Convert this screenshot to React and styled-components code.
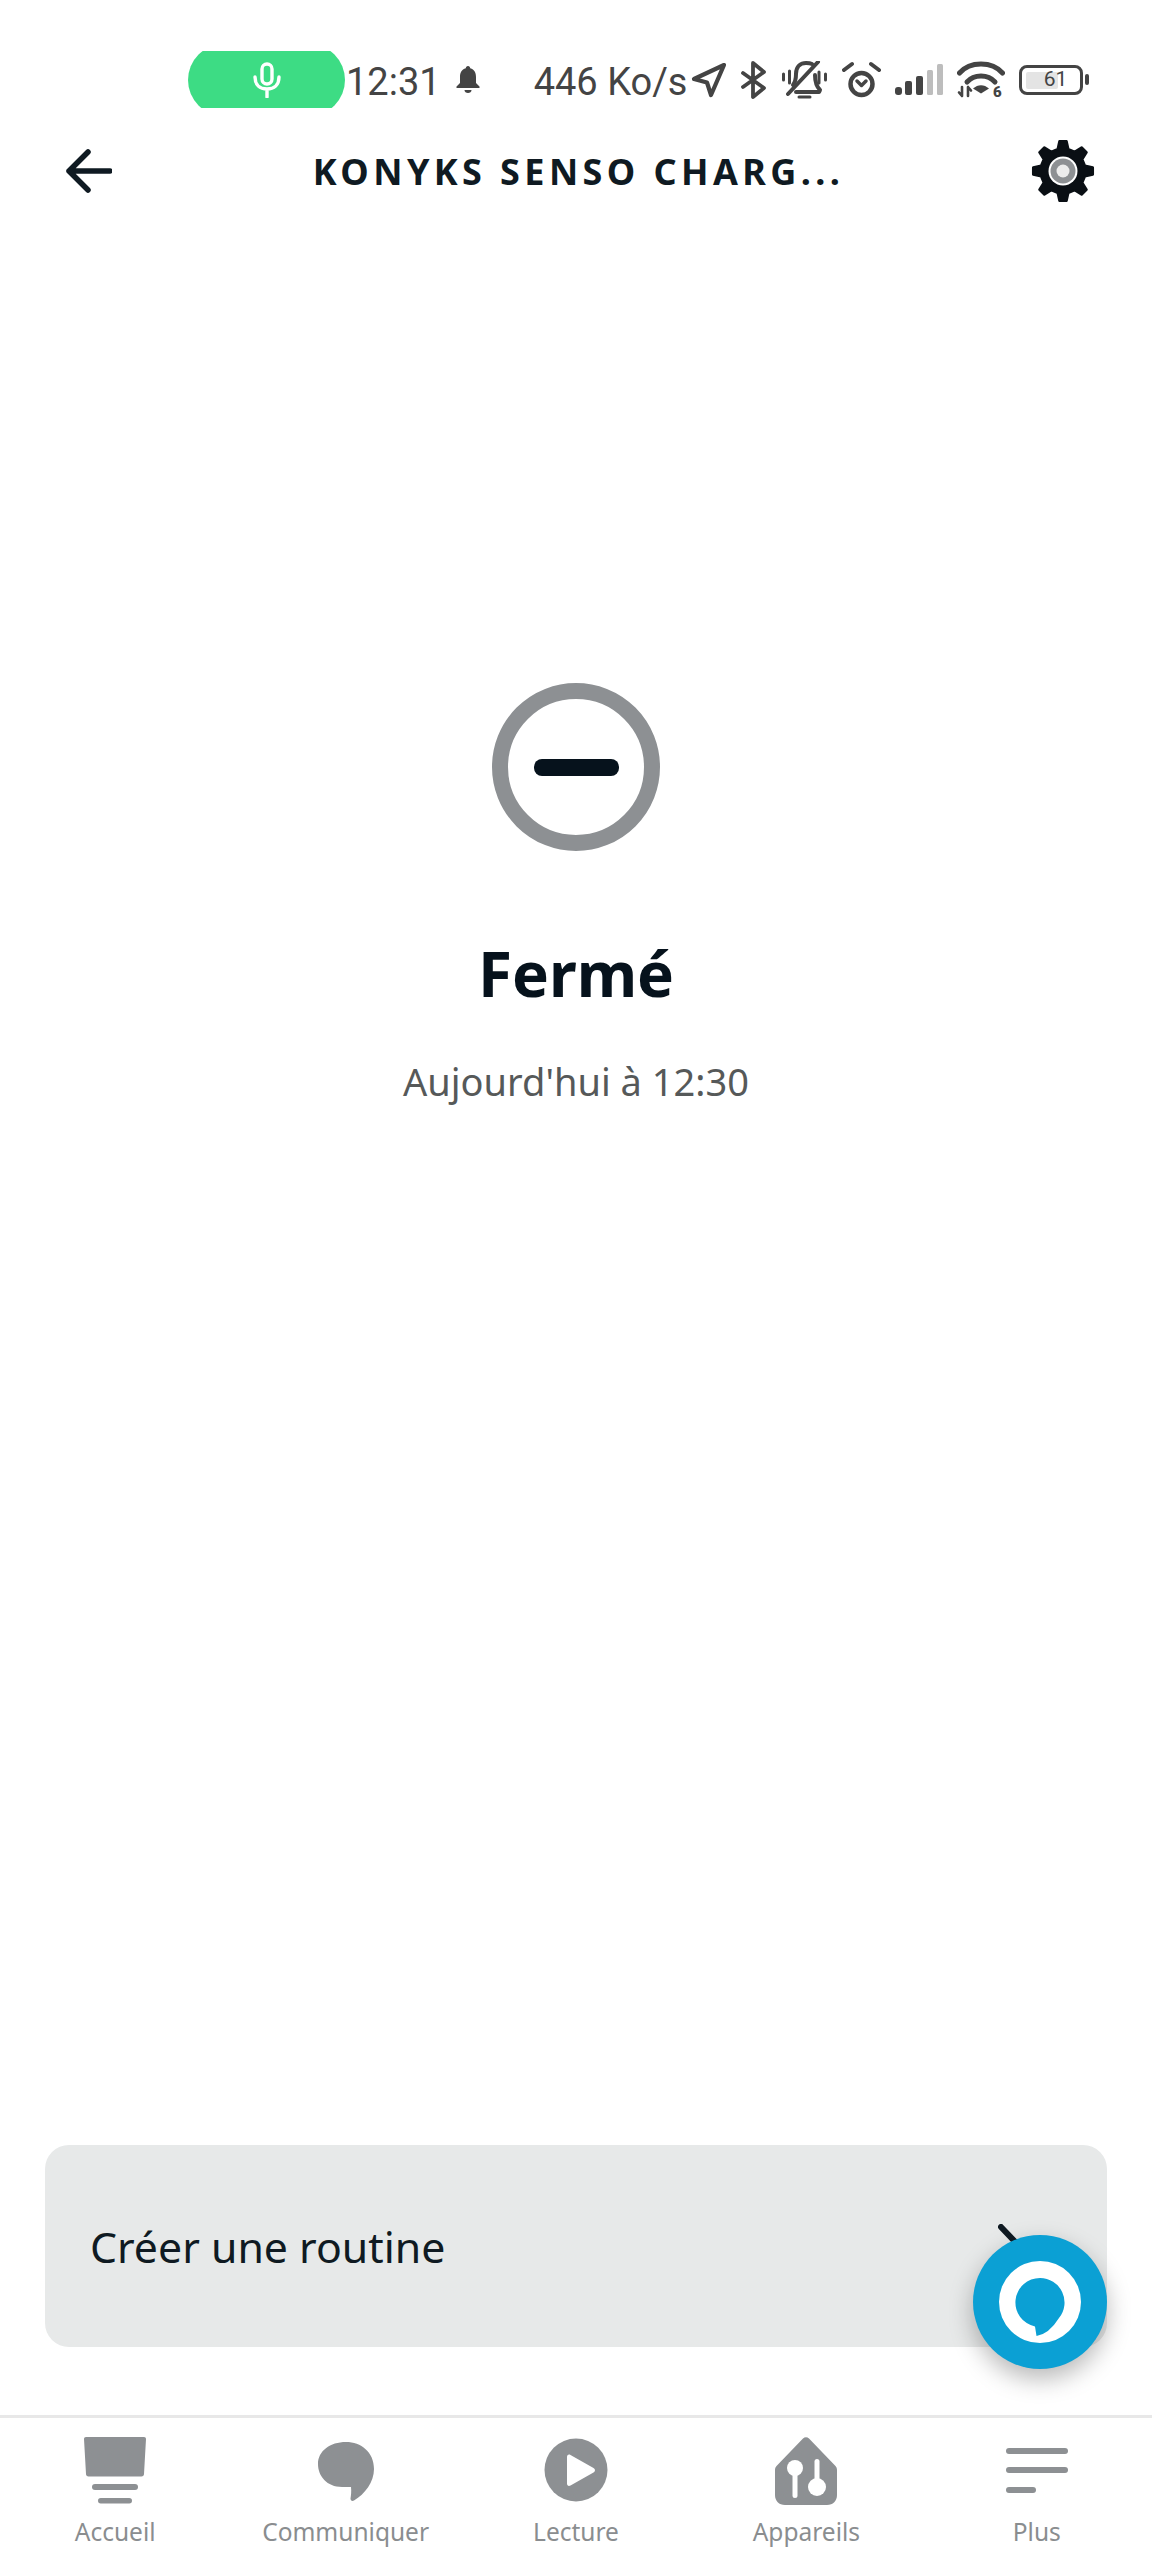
import React from 'react'
import styled, { createGlobalStyle } from 'styled-components'

const GlobalStyle = createGlobalStyle`
  html, body {
    margin: 0;
    padding: 0;
    background: #fff;
  }
  * {
    box-sizing: border-box;
  }
`

// builds the settings cog outline, 8 teeth
function gearPath(cx, cy, outer, root) {
  const pts = []
  const teeth = 8
  for (let i = 0; i < teeth; i++) {
    const a = (i / teeth) * Math.PI * 2 - Math.PI / 2
    const step = Math.PI / teeth
    const at = (r, t) => `${(cx + r * Math.cos(t)).toFixed(2)} ${(cy + r * Math.sin(t)).toFixed(2)}`
    pts.push(at(root, a - step * 0.6), at(outer, a - step * 0.3), at(outer, a + step * 0.3), at(root, a + step * 0.6))
  }
  return 'M' + pts.join('L') + 'Z'
}

function App() {
  return (
    <>
      <GlobalStyle />
      <Page>
        <StatusBar>
          <PillClip>
            <Pill>
              <svg width="28" height="36" viewBox="0 0 28 36" fill="none" stroke="#fff" strokeWidth="3.4" strokeLinecap="round">
                <rect x="9" y="2" width="10" height="20" rx="5" />
                <path d="M2 15c0 8 5 12 12 12s12-4 12-12M14 27v8" />
              </svg>
            </Pill>
          </PillClip>
          <Clock>12:31</Clock>
          <BellIcon width="24" height="27" viewBox="0 0 24 27" fill="#444">
            <path d="M12 0c1.400 0 2.200 1 2.200 2.300C18.500 3.500 20 7 20 11v6l3.500 3.500V22H.5v-1.500L4 17v-6c0-4 1.500-7.500 5.800-8.700C9.800 1 10.600 0 12 0z" />
            <path d="M8.500 24h7c0 1.800-1.500 3-3.500 3s-3.500-1.200-3.500-3z" />
          </BellIcon>
          <Speed>446 Ko/s</Speed>
          <StatusIcon $ml={4} width="36" height="36" viewBox="0 0 36 36" fill="none" stroke="#444" strokeWidth="4.2" strokeLinejoin="round">
            <path d="M33 3 3 17l13 3.500L20 33z" />
          </StatusIcon>
          <StatusIcon $ml={14} width="26" height="38" viewBox="0 0 26 38" fill="none" stroke="#444" strokeWidth="3.800" strokeLinejoin="round" strokeLinecap="round">
            <path d="M2 12 23 27 12 36V2l11 9L2 26" />
          </StatusIcon>
          <StatusIcon $ml={15} width="46" height="38" viewBox="0 0 46 38" fill="none" stroke="#444" strokeWidth="4" strokeLinecap="round" strokeLinejoin="round">
            <path d="M1.500 13v6M7.500 10v12M37 11v11M43.500 13v6" strokeWidth="3" />
            <path d="M11 24c3-4 3-7 3-11 0-8 5-11 10-11 2 0 4 0 6 1M33 14c0 6 1 11 5 15l-1 2H14" />
            <path d="M36 1 6 33" />
            <path d="M17 36h11" strokeWidth="3" />
          </StatusIcon>
          <StatusIcon $ml={14} width="40" height="38" viewBox="0 0 40 38" fill="none" stroke="#444" strokeLinecap="round" strokeLinejoin="round">
            <circle cx="19.500" cy="23" r="11" strokeWidth="4.500" />
            <path d="M15 20l4.500 4.500L24 20" strokeWidth="3.500" />
            <path d="M2 9l8-6M37 9l-8-6" strokeWidth="4" />
          </StatusIcon>
          <StatusIcon $ml={13} width="49" height="32" viewBox="0 0 49 32" fill="#444">
            <rect x="0" y="23" width="7" height="8" rx="3" />
            <rect x="10" y="17" width="7" height="14" rx="2" />
            <rect x="21" y="12" width="7" height="19" rx="2" />
            <rect x="32" y="6" width="6" height="25" rx="1.500" fill="#bdbdbd" />
            <rect x="42" y="0" width="6" height="31" rx="1.500" fill="#bdbdbd" />
          </StatusIcon>
          <StatusIcon $ml={13} width="48" height="38" viewBox="0 0 48 38" fill="none" stroke="#444" strokeLinecap="round">
            <path d="M2.500 12C13 0 35 0 45.500 12" strokeWidth="5" />
            <path d="M10 21c7-8 21-8 28 0" strokeWidth="5" />
            <path d="M16 27.500c5-4.500 11-4.500 16 0l-8 5z" fill="#444" stroke="none" strokeLinejoin="round" />
            <path d="M5 26v9M2 31.500 5 35M11 26v9M11 26l3 3.500" strokeWidth="2.600" />
            <SpeedDigit x="36" y="36">6</SpeedDigit>
          </StatusIcon>
          <Battery>
            <BatteryFill />
            <BatteryLevel>61</BatteryLevel>
          </Battery>
          <BatteryNub />
        </StatusBar>

        <Header>
          <svg width="46" height="44" viewBox="0 0 46 44" fill="none" stroke="#0f1a22" strokeWidth="5.500" strokeLinecap="round" strokeLinejoin="round">
            <path d="M44 22H3M22 3 3 22l19 19" />
          </svg>
          <Title>KONYKS SENSO CHARG...</Title>
          <svg width="64" height="64" viewBox="0 0 64 64">
            <path d={gearPath(32, 32, 30, 22.500)} fill="#0a0f14" stroke="#0a0f14" strokeWidth="2.500" strokeLinejoin="round" />
            <circle cx="32" cy="32" r="14.500" fill="#fff" />
            <circle cx="32" cy="32" r="12.500" fill="#8d9093" />
            <circle cx="32" cy="32" r="6.500" fill="#ececec" />
          </svg>
        </Header>

        <Content>
          <StateRing>
            <StateDash />
          </StateRing>
          <StateLabel>Fermé</StateLabel>
          <StateTime>Aujourd'hui à 12:30</StateTime>
        </Content>

        <RoutineCard>
          <RoutineLabel>Créer une routine</RoutineLabel>
          <RoutineChevron width="24" height="44" viewBox="0 0 24 44" fill="none" stroke="#0f1a22" strokeWidth="6" strokeLinecap="round" strokeLinejoin="round">
            <path d="M3 3l18 19L3 41" />
          </RoutineChevron>
          <AlexaButton>
            <svg width="82" height="82" viewBox="0 0 82 82">
              <circle cx="41" cy="41" r="41" fill="#fff" />
              <path d="M41 17A24.500 24.500 0 0 0 36 65.500L37.500 75Q50 73 60 57A24.500 24.500 0 0 0 41 17Z" fill="#0ba0d4" />
            </svg>
          </AlexaButton>
        </RoutineCard>

        <NavBar>
          <NavItem>
            <svg width="62" height="68" viewBox="0 0 62 68" fill="#8d9093">
              <path d="M2 0h58c1.200 0 2 .8 2 2l-2 35c0 1.500-1 2.500-2.500 2.500h-53C3 39.500 2 38.500 2 37L0 2c0-1.200.8-2 2-2z" />
              <rect x="8" y="47" width="46" height="6" rx="3" />
              <rect x="14" y="61" width="34" height="5.500" rx="2.750" />
            </svg>
            <NavLabel>Accueil</NavLabel>
          </NavItem>
          <NavItem>
            <svg width="62" height="68" viewBox="0 0 62 68" fill="#8d9093">
              <path d="M31 5c15 0 28 10 28 27 0 13-9 25-20 31.500-2 1-3.500 0-3.500-2 .5-3 1-7 .5-11.500H27C12 50 3 39 3 27 3 14 15 5 31 5z" />
            </svg>
            <NavLabel>Communiquer</NavLabel>
          </NavItem>
          <NavItem>
            <svg width="68" height="68" viewBox="0 0 68 68">
              <circle cx="34" cy="33" r="31.500" fill="#8d9093" />
              <path d="M25 20c0-2 1.500-3 3.500-2l23 13c2 1 2 3.500 0 4.500l-23 13c-2 1-3.500 0-3.500-2z" fill="#fff" />
            </svg>
            <NavLabel>Lecture</NavLabel>
          </NavItem>
          <NavItem>
            <svg width="62" height="68" viewBox="0 0 62 68">
              <path d="M28 1.500c1.700-1.700 4.300-1.700 6 0l26 27c1.300 1.300 2 2.700 2 4.500V58c0 6-4 10-10 10H10C4 68 0 64 0 58V33c0-1.800.7-3.200 2-4.500z" fill="#8d9093" />
              <circle cx="20" cy="31" r="8" fill="#fff" />
              <rect x="17.500" y="31" width="5" height="30" rx="2.500" fill="#fff" />
              <rect x="39.500" y="22" width="5" height="30" rx="2.500" fill="#fff" />
              <circle cx="42" cy="50" r="9" fill="#fff" />
            </svg>
            <NavLabel>Appareils</NavLabel>
          </NavItem>
          <NavItem>
            <svg width="62" height="68" viewBox="0 0 62 68" fill="#8d9093">
              <rect x="0" y="11" width="62" height="6" rx="3" />
              <rect x="0" y="30" width="62" height="6" rx="3" />
              <rect x="0" y="50" width="30" height="6" rx="3" />
            </svg>
            <NavLabel>Plus</NavLabel>
          </NavItem>
        </NavBar>
      </Page>
    </>
  )
}

export default App

const Page = styled.div`
  width: 1152px;
  height: 2560px;
  display: flex;
  flex-direction: column;
  background: #fff;
  overflow: hidden;
`

const StatusBar = styled.div`
  height: 108px;
  padding: 51px 0 0 188px;
  display: flex;
  align-items: center;
  flex-shrink: 0;
  color: #444;
  font-family: Roboto, sans-serif;
`

const PillClip = styled.div`
  width: 157px;
  height: 57px;
  overflow: hidden;
  display: flex;
  align-items: center;
  flex-shrink: 0;
`

const Pill = styled.div`
  width: 157px;
  height: 72px;
  flex-shrink: 0;
  border-radius: 36px;
  background: #3ddc84;
  display: flex;
  align-items: center;
  justify-content: center;
`

const Clock = styled.span`
  margin: 4px 0 0 1px;
  font-size: 38px;
  white-space: nowrap;
`

const BellIcon = styled.svg`
  margin-left: 15px;
  flex-shrink: 0;
`

const Speed = styled.span`
  margin: 4px 0 0 54px;
  font-size: 38px;
  white-space: nowrap;
  flex-shrink: 0;
`

const StatusIcon = styled.svg`
  margin-left: ${(p) => p.$ml}px;
  flex-shrink: 0;
`

const SpeedDigit = styled.text`
  font-family: Roboto, sans-serif;
  font-size: 15px;
  font-weight: 900;
  fill: #444;
  stroke: none;
`

const Battery = styled.div`
  position: relative;
  margin-left: 14px;
  width: 64px;
  height: 30px;
  flex-shrink: 0;
  border: 3px solid #444;
  border-radius: 8px;
  display: flex;
  align-items: center;
  justify-content: center;
`

const BatteryFill = styled.div`
  position: absolute;
  left: 4px;
  top: 4px;
  width: 32px;
  height: 17px;
  border-radius: 2px;
  background: #e4e4e4;
`

const BatteryLevel = styled.span`
  position: relative;
  margin-left: 8px;
  font-size: 21px;
  line-height: 1;
`

const BatteryNub = styled.div`
  width: 4px;
  height: 11px;
  margin-left: 2px;
  flex-shrink: 0;
  border-radius: 2px;
  background: #444;
`

const Header = styled.div`
  height: 126px;
  padding: 0 57px 0 66px;
  display: flex;
  align-items: center;
  justify-content: space-between;
  flex-shrink: 0;
`

const Title = styled.h1`
  margin: 0 0 0 14px;
  font-family: "Noto Sans", sans-serif;
  font-size: 36px;
  font-weight: 700;
  letter-spacing: 4.400px;
  color: #0f1a22;
  white-space: nowrap;
`

const Content = styled.div`
  flex: 1;
  padding-top: 449px;
  display: flex;
  flex-direction: column;
  align-items: center;
`

const StateRing = styled.div`
  width: 168px;
  height: 168px;
  border: 16px solid #8d9093;
  border-radius: 50%;
  display: flex;
  align-items: center;
  justify-content: center;
`

const StateDash = styled.div`
  width: 85px;
  height: 17px;
  border-radius: 8px;
  background: #06121c;
`

const StateLabel = styled.div`
  margin-top: 78px;
  font-family: "Noto Sans", sans-serif;
  font-size: 62px;
  font-weight: 700;
  line-height: 88px;
  color: #06121c;
`

const StateTime = styled.div`
  margin-top: 38px;
  font-family: "Noto Sans", sans-serif;
  font-size: 38px;
  line-height: 52px;
  color: #565959;
`

const RoutineCard = styled.div`
  position: relative;
  height: 202px;
  margin: 0 45px 68px;
  padding: 0 47px 0 45px;
  flex-shrink: 0;
  display: flex;
  align-items: center;
  justify-content: space-between;
  border-radius: 24px;
  background: #e7e9e9;
`

const RoutineLabel = styled.span`
  font-family: "Noto Sans", sans-serif;
  font-size: 42.800px;
  color: #0f1a22;
`

const RoutineChevron = styled.svg`
  margin-right: 38px;
`

const AlexaButton = styled.div`
  position: absolute;
  right: 0;
  bottom: -22px;
  width: 134px;
  height: 134px;
  display: flex;
  align-items: center;
  justify-content: center;
  border-radius: 50%;
  background: #0ba0d4;
  box-shadow: 0 10px 24px rgba(0, 0, 0, 0.28);
`

const NavBar = styled.div`
  height: 145px;
  padding-top: 19px;
  display: grid;
  grid-template-columns: repeat(5, 1fr);
  flex-shrink: 0;
  border-top: 3px solid #e8e8e8;
`

const NavItem = styled.div`
  display: flex;
  flex-direction: column;
  align-items: center;
`

const NavLabel = styled.span`
  margin-top: 10px;
  font-family: "Noto Sans", sans-serif;
  font-size: 24.500px;
  line-height: 34px;
  color: #8a8d8f;
`
